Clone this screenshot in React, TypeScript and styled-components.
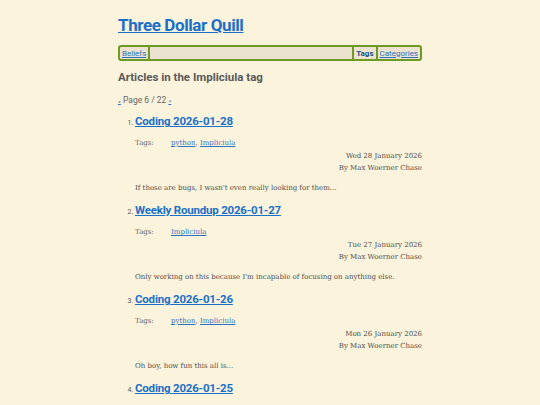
import React from 'react';
import styled, { createGlobalStyle } from 'styled-components';

const GlobalStyle = createGlobalStyle`
  html, body {
    margin: 0;
    padding: 0;
    background: #fbf3dc;
  }
  body {
    font-family: "DejaVu Serif", serif;
    color: #555;
  }
`;

const HEAD_FONT = `"Roboto", "Open Sans", sans-serif`;

const Page = styled.div`
  width: 304px;
  margin: 0 auto;
  padding-top: 14px;
`;

const SiteTitle = styled.h1`
  margin: 0;
  font-family: ${HEAD_FONT};
  font-size: 17px;
  line-height: 22px;
  font-weight: 700;
  letter-spacing: -0.4px;

  a {
    color: #1a70c8;
  }
`;

const NavBar = styled.nav`
  margin-top: 9px;
  display: flex;
  align-items: stretch;
  border: 2px solid #6d9a22;
  border-radius: 3px;
  background: #ebe3cf;
  height: 12px;
  font-family: ${HEAD_FONT};
  font-size: 8px;
`;

const NavItem = styled.a<{ $current?: boolean }>`
  display: flex;
  align-items: center;
  padding: 0 2px;
  color: ${(p) => (p.$current ? '#1d4f8a' : '#2f73c0')};
  font-weight: ${(p) => (p.$current ? 700 : 400)};
  text-decoration: ${(p) => (p.$current ? 'none' : 'underline')};
`;

const NavSep = styled.span`
  width: 2px;
  background: #6d9a22;
`;

const NavSpacer = styled.div`
  flex: 1;
`;

const TagHeading = styled.h2`
  margin: 8px 0 0;
  font-family: ${HEAD_FONT};
  font-size: 11.5px;
  line-height: 16px;
  font-weight: 700;
  color: #5a5a5a;
`;

const Pager = styled.div`
  margin-top: 9px;
  height: 12px;
  font-family: ${HEAD_FONT};
  font-size: 8.5px;
  line-height: 12px;
  color: #666;

  a {
    color: #2f73c0;
    font-size: 6px;
  }
`;

const ArticleList = styled.ol`
  margin: 6px 0 0;
  padding-left: 17px;
`;

const Article = styled.li`
  margin-bottom: 7px;
  font-family: ${HEAD_FONT};
  font-size: 7px;
  line-height: 12px;
  color: #555;
`;

const ArticleTitle = styled.h3`
  margin: 0;
  font-family: ${HEAD_FONT};
  font-size: 11.5px;
  line-height: 18px;
  font-weight: 700;
  letter-spacing: -0.2px;

  a {
    color: #1a70c8;
  }
`;

const TagsRow = styled.div`
  margin-top: 7px;
  display: flex;
  font-family: "DejaVu Serif", serif;
  font-size: 7px;
  line-height: 12px;
  color: #666;

  a {
    color: #2f73c0;
  }
`;

const TagsLabel = styled.span`
  width: 36px;
`;

const Meta = styled.div`
  margin-top: 1px;
  text-align: right;
  font-family: "DejaVu Serif", serif;
  font-size: 7px;
  line-height: 12px;
  color: #4d4d4d;
`;

const Summary = styled.p`
  margin: 8px 0 0;
  font-family: "DejaVu Serif", serif;
  font-size: 7px;
  line-height: 12px;
  color: #4d4d4d;
`;

const articles = [
  {
    title: 'Coding 2026-01-28',
    tags: ['python', 'Impliciula'],
    date: 'Wed 28 January 2026',
    summary: "If those are bugs, I wasn't even really looking for them...",
  },
  {
    title: 'Weekly Roundup 2026-01-27',
    tags: ['Impliciula'],
    date: 'Tue 27 January 2026',
    summary: "Only working on this because I'm incapable of focusing on anything else.",
  },
  {
    title: 'Coding 2026-01-26',
    tags: ['python', 'Impliciula'],
    date: 'Mon 26 January 2026',
    summary: 'Oh boy, how fun this all is...',
  },
  {
    title: 'Coding 2026-01-25',
    tags: ['python', 'Impliciula'],
    date: 'Sun 25 January 2026',
    summary: 'More of the same.',
  },
];

const App: React.FC = () => {
  return (
    <>
      <GlobalStyle />
      <Page>
        <SiteTitle>
          <a href="#">Three Dollar Quill</a>
        </SiteTitle>
        <NavBar>
          <NavItem href="#">Beliefs</NavItem>
          <NavSep />
          <NavSpacer />
          <NavSep />
          <NavItem $current>Tags</NavItem>
          <NavSep />
          <NavItem href="#">Categories</NavItem>
        </NavBar>
        <TagHeading>Articles in the Impliciula tag</TagHeading>
        <Pager>
          <a href="#">«</a> Page 6 / 22 <a href="#">»</a>
        </Pager>
        <ArticleList>
          {articles.map((a) => (
            <Article key={a.title}>
              <ArticleTitle>
                <a href="#">{a.title}</a>
              </ArticleTitle>
              <TagsRow>
                <TagsLabel>Tags:</TagsLabel>
                <span>
                  {a.tags.map((t, i) => (
                    <React.Fragment key={t}>
                      {i > 0 && ', '}
                      <a href="#">{t}</a>
                    </React.Fragment>
                  ))}
                </span>
              </TagsRow>
              <Meta>
                {a.date}
                <br />
                By Max Woerner Chase
              </Meta>
              <Summary>{a.summary}</Summary>
            </Article>
          ))}
        </ArticleList>
      </Page>
    </>
  );
};

export default App;
